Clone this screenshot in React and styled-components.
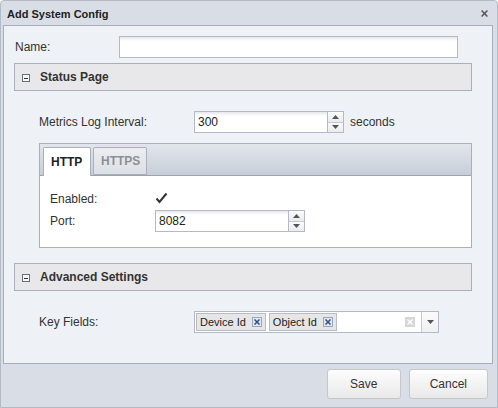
import React from "react";
import styled, { createGlobalStyle } from "styled-components";

const Global = createGlobalStyle`
  html, body { margin: 0; padding: 0; background: #ffffff; }
  body { font-family: "Liberation Sans", Arial, sans-serif; font-size: 12px; color: #333; }
  * { box-sizing: border-box; }
`;

const Window = styled.div`
  width: 498px;
  height: 408px;
  background: #d9dee6;
  border: 1px solid #b3bbc7;
  border-radius: 4px 4px 0 0;
  display: flex;
  flex-direction: column;
  padding: 0 4px 0 2px;
`;

const TitleBar = styled.div`
  height: 24px;
  display: flex;
  align-items: center;
  justify-content: space-between;
  padding: 0 5px 0 4px;
`;

const Title = styled.div`
  font-weight: bold;
  font-size: 11px;
  color: #222;
  padding-top: 1px;
`;

const CloseButton = styled.div`
  width: 8px;
  height: 8px;
  display: flex;
  align-items: center;
  justify-content: center;
  margin-top: 1px;
`;

const Body = styled.div`
  width: 490px;
  height: 339px;
  background: #eef1f5;
  border: 1px solid #a7afbd;
  padding: 10px 20px 0 10px;
  display: flex;
  flex-direction: column;
`;

const FieldRow = styled.div`
  display: flex;
  align-items: center;
  height: 22px;
`;

const Label = styled.div`
  width: ${(p) => p.$width}px;
  flex: none;
  padding-left: ${(p) => p.$pad || 0}px;
  color: #333;
  white-space: nowrap;
`;

const TextInput = styled.div`
  width: ${(p) => p.$width}px;
  height: 22px;
  border: 1px solid #b5b8c8;
  background: linear-gradient(#e6e7ea 0, #ffffff 4px, #ffffff 100%);
`;

const SpinnerBox = styled.div`
  width: ${(p) => p.$width}px;
  height: 22px;
  display: flex;
`;

const SpinnerText = styled.div`
  flex: 1;
  border: 1px solid #b5b8c8;
  border-right: none;
  background: linear-gradient(#e6e7ea 0, #ffffff 4px, #ffffff 100%);
  display: flex;
  align-items: center;
  padding-left: 3px;
  color: #222;
`;

const SpinnerButtons = styled.div`
  width: 17px;
  border: 1px solid #b5b8c8;
  display: flex;
  flex-direction: column;
`;

const SpinHalf = styled.div`
  flex: 1;
  display: flex;
  align-items: center;
  justify-content: center;
  background: linear-gradient(#fbfbfb, #e9ebee);
  & + & { border-top: 1px solid #c5c8d2; }
`;

const Unit = styled.div`
  margin-left: 6px;
  color: #333;
`;

const SectionHeader = styled.div`
  height: 28px;
  margin-top: ${(p) => p.$top}px;
  background: #e8e8ea;
  border: 1px solid #a9afbc;
  display: flex;
  align-items: center;
  padding-left: 7px;
  gap: 10px;
`;

const CollapseIcon = styled.div`
  width: 8px;
  height: 8px;
  border: 1px solid #6b6f76;
  background: #f6f6f6;
  display: flex;
  align-items: center;
  justify-content: center;
  margin-top: 2px;
  &::after {
    content: "";
    width: 4px;
    height: 1px;
    background: #333;
  }
`;

const SectionTitle = styled.div`
  font-weight: bold;
  font-size: 12px;
  color: #333;
`;

const SectionContent = styled.div`
  padding: 20px 0 0 25px;
  display: flex;
  flex-direction: column;
`;

const TabPanel = styled.div`
  margin-top: 10px;
  border: 1px solid #a9afbc;
  display: flex;
  flex-direction: column;
`;

const TabBar = styled.div`
  height: 32px;
  padding: 3px 0 0 3px;
  display: flex;
  align-items: flex-start;
  gap: 2px;
  background: linear-gradient(#e2e6ec, #c7ced8);
  border-bottom: 1px solid #98a2b1;
`;

const Tab = styled.div`
  width: ${(p) => p.$width}px;
  height: ${(p) => (p.$active ? 29 : 28)}px;
  border: 1px solid #a9afbc;
  border-bottom: ${(p) => (p.$active ? "none" : "1px solid #a9afbc")};
  border-radius: 2px 2px 0 0;
  background: ${(p) => (p.$active ? "#ffffff" : "linear-gradient(#eceef1, #dcdfe4)")};
  color: ${(p) => (p.$active ? "#222" : "#8c9096")};
  font-weight: bold;
  display: flex;
  align-items: center;
  padding-left: 7px;
  padding-bottom: 1px;
  position: relative;
  z-index: 1;
`;

const TabBody = styled.div`
  background: #ffffff;
  padding: 12px 0 15px 10px;
  display: flex;
  flex-direction: column;
`;

const Check = styled.div`
  width: 13px;
  height: 12px;
  margin-bottom: 3px;
`;

const TagField = styled.div`
  width: 245px;
  height: 22px;
  border: 1px solid #b5b8c8;
  background: #ffffff;
  display: flex;
  align-items: center;
  padding-left: 1px;
`;

const Tags = styled.div`
  flex: 1;
  display: flex;
  align-items: center;
  gap: 3px;
`;

const Tag = styled.div`
  height: 18px;
  display: flex;
  align-items: center;
  gap: 6px;
  padding: 0 3px 0 3px;
  background: #e6e6e6;
  border: 1px solid #b9bcc4;
  color: #222;
  font-size: 11px;
`;

const TagRemove = styled.div`
  width: 10px;
  height: 10px;
  border: 1px solid #99a8c0;
  background: #dfe6f0;
  display: flex;
  align-items: center;
  justify-content: center;
`;

const ClearIcon = styled.div`
  width: 10px;
  height: 10px;
  background: #d6d6d6;
  display: flex;
  align-items: center;
  justify-content: center;
  margin-right: 6px;
`;

const Trigger = styled.div`
  width: 17px;
  height: 100%;
  border-left: 1px solid #c5c8d2;
  background: linear-gradient(#fbfbfb, #eef0f3);
  display: flex;
  align-items: center;
  justify-content: center;
`;

const Footer = styled.div`
  flex: 1;
  display: flex;
  justify-content: flex-end;
  align-items: flex-start;
  gap: 8px;
  padding: 5px 5px 0 0;
`;

const Button = styled.div`
  min-width: 74px;
  height: 30px;
  padding: 0 20px;
  border: 1px solid #c4c7cc;
  border-radius: 3px;
  background: linear-gradient(#fdfdfd, #e9e9ea);
  display: flex;
  align-items: center;
  justify-content: center;
  color: #333;
`;

const UpArrow = () => (
  <svg width="7" height="4" viewBox="0 0 7 4"><path d="M0 4 L3.5 0 L7 4 Z" fill="#555" /></svg>
);
const DownArrow = () => (
  <svg width="7" height="4" viewBox="0 0 7 4"><path d="M0 0 L7 0 L3.5 4 Z" fill="#555" /></svg>
);

const Spinner = ({ width, value }) => (
  <SpinnerBox $width={width}>
    <SpinnerText>{value}</SpinnerText>
    <SpinnerButtons>
      <SpinHalf><UpArrow /></SpinHalf>
      <SpinHalf><DownArrow /></SpinHalf>
    </SpinnerButtons>
  </SpinnerBox>
);

const XMark = ({ size, color, width = 1.4 }) => (
  <svg width={size} height={size} viewBox="0 0 6 6">
    <path d="M0.5 0.5 L5.5 5.5 M5.5 0.5 L0.5 5.5" stroke={color} strokeWidth={width} fill="none" />
  </svg>
);

const Section = ({ title, top, children }) => (
  <>
    <SectionHeader $top={top}>
      <CollapseIcon />
      <SectionTitle>{title}</SectionTitle>
    </SectionHeader>
    <SectionContent>{children}</SectionContent>
  </>
);

export default function App() {
  return (
    <>
      <Global />
      <Window>
        <TitleBar>
          <Title>Add System Config</Title>
          <CloseButton><XMark size={7} color="#555" width={1.3} /></CloseButton>
        </TitleBar>
        <Body>
          <FieldRow>
            <Label $width={105} $pad={1}>Name:</Label>
            <TextInput $width={339} />
          </FieldRow>
          <Section title="Status Page" top={5}>
            <FieldRow>
              <Label $width={155}>Metrics Log Interval:</Label>
              <Spinner width={150} value="300" />
              <Unit>seconds</Unit>
            </FieldRow>
            <TabPanel>
              <TabBar>
                <Tab $active $width={48}>HTTP</Tab>
                <Tab $width={54}>HTTPS</Tab>
              </TabBar>
              <TabBody>
                <FieldRow>
                  <Label $width={105}>Enabled:</Label>
                  <Check>
                    <svg width="13" height="12" viewBox="0 0 13 12">
                      <path d="M1.5 6.5 L4.5 10 L11.5 1.5" stroke="#333" strokeWidth="2" fill="none" />
                    </svg>
                  </Check>
                </FieldRow>
                <FieldRow>
                  <Label $width={105}>Port:</Label>
                  <Spinner width={150} value="8082" />
                </FieldRow>
              </TabBody>
            </TabPanel>
          </Section>
          <Section title="Advanced Settings" top={15}>
            <FieldRow>
              <Label $width={155}>Key Fields:</Label>
              <TagField>
                <Tags>
                  <Tag>Device Id<TagRemove><XMark size={6} color="#2f4f86" width={1.5} /></TagRemove></Tag>
                  <Tag>Object Id<TagRemove><XMark size={6} color="#2f4f86" width={1.5} /></TagRemove></Tag>
                </Tags>
                <ClearIcon><XMark size={6} color="#ffffff" width={1.3} /></ClearIcon>
                <Trigger><DownArrow /></Trigger>
              </TagField>
            </FieldRow>
          </Section>
        </Body>
        <Footer>
          <Button>Save</Button>
          <Button>Cancel</Button>
        </Footer>
      </Window>
    </>
  );
}
